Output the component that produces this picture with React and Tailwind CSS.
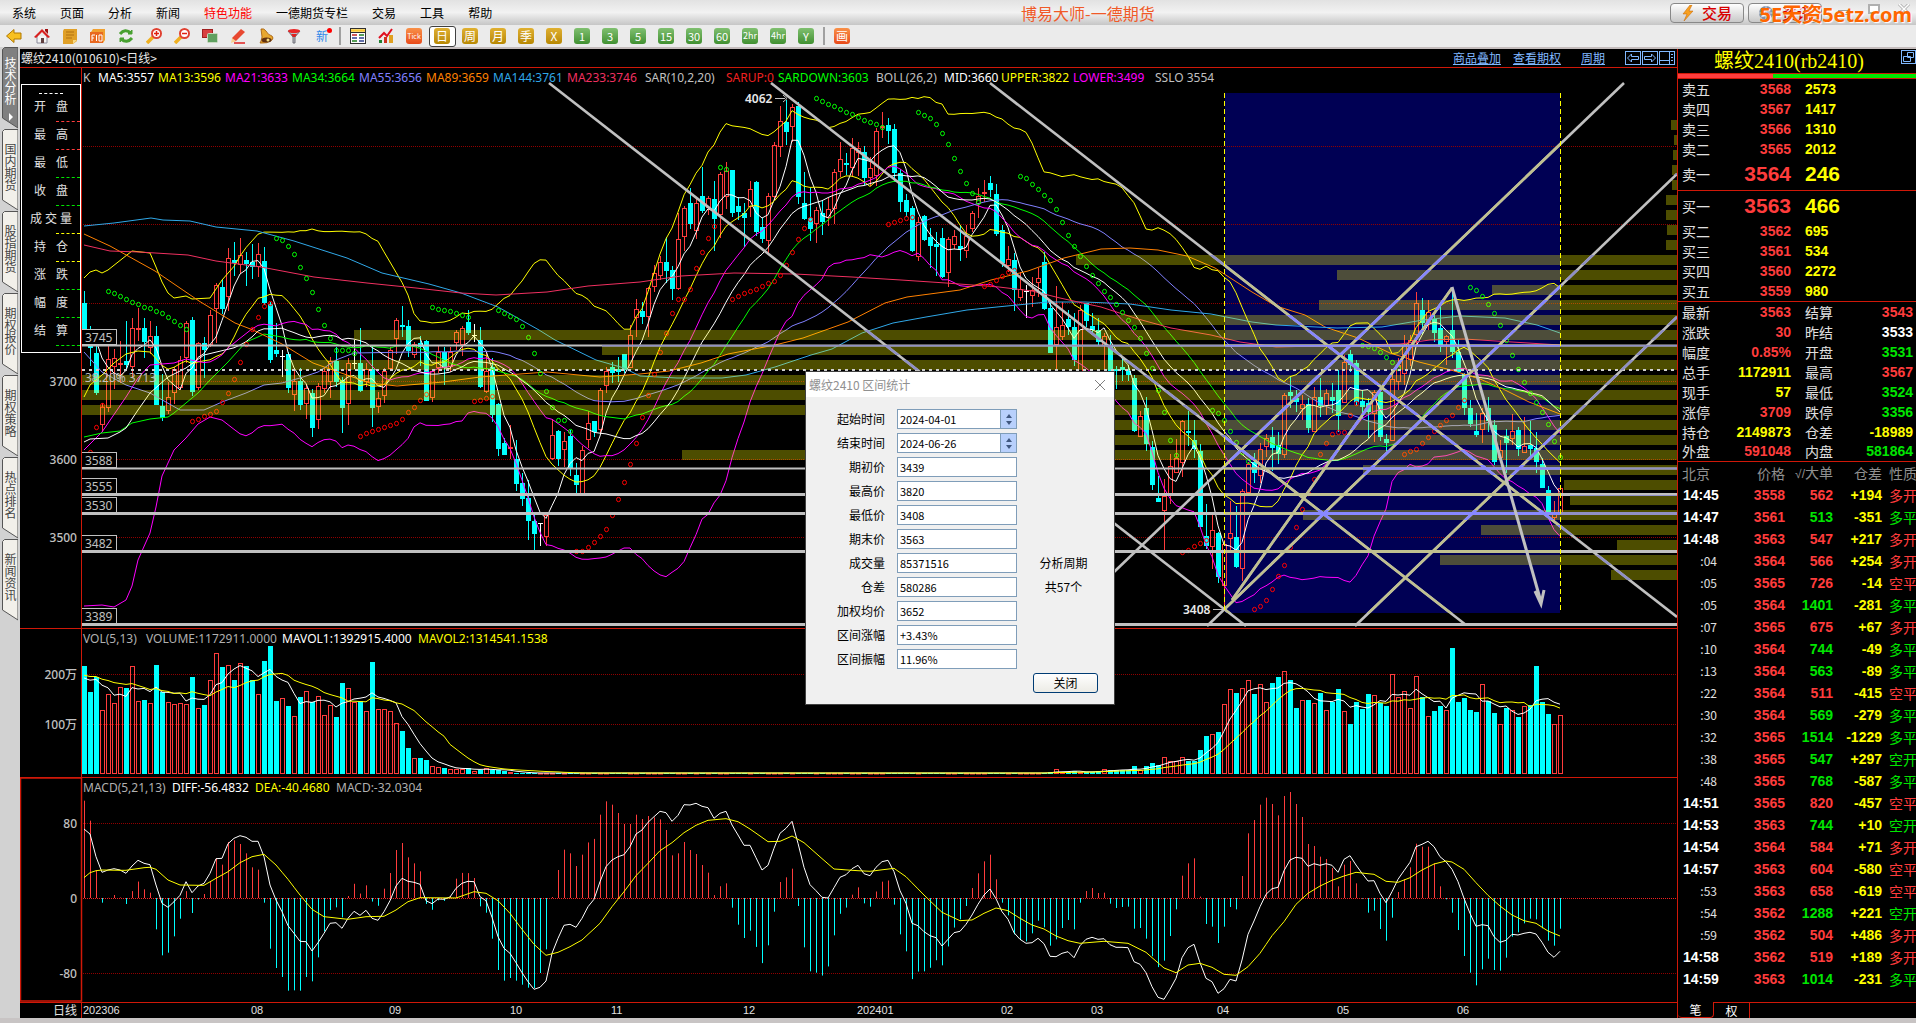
import React from "react";

/* ---------- market data ---------- */

// One token per day: kind (c = down, r = up, w = flat), then high, body top, body bottom, low.
const CANDLES = `
c291,303,330,330 c326,345,348,366 c345,353,393,395 r403,407,425,432 r346,359,408,412 r349,358,367,389 r341,363,365,383 c321,361,365,370
r318,328,367,377 r308,328,330,341 c318,328,342,358 r321,336,348,354 c326,336,405,405 c374,406,418,421 r382,397,411,414 r367,369,393,404
r356,360,388,390 r321,323,358,363 c317,320,392,396 r342,343,388,390 c337,343,350,378 r310,315,345,347 r283,285,309,343 c279,287,309,314
r248,258,297,311 c242,260,263,276 r238,255,265,273 c252,260,264,286 c244,262,267,279 r243,254,267,277 c247,261,303,305 c302,304,360,363
c323,350,354,357 w350,356,356,377 c352,354,388,393 r370,381,395,411 c368,381,405,410 r384,388,404,419 c389,393,428,437 r383,386,420,429
r368,371,389,393 r357,361,382,398 c347,361,382,387 c377,380,408,433 r358,363,404,425 w340,363,363,369 c328,363,391,392 r363,369,382,387
c345,369,408,427 r392,398,407,413 r368,371,396,403 r347,350,369,370 r318,320,339,354 c306,325,327,337 c320,326,351,357 r342,344,355,358
c336,343,347,366 c340,341,401,401 r369,371,398,402 r346,352,368,373 c347,352,368,385 r347,352,367,372 r330,332,343,350 r326,328,345,356
c310,322,333,335 w324,335,335,342 c327,340,387,388 r353,371,392,393 c358,367,415,422 c403,404,449,456 c438,443,455,455 r425,447,449,459
c440,459,484,491 c473,483,499,506 c480,498,521,540 c514,521,534,552 w523,523,523,546 r513,515,537,546 r419,435,459,460 c430,431,459,466
r432,441,450,467 c430,436,468,476 c463,475,485,495 r446,450,494,495 r411,423,440,448 c421,421,432,437 r388,390,430,433 r367,371,386,393
c362,367,373,383 c357,369,372,382 c354,354,370,373 r325,335,368,368 r299,309,318,337 c302,311,317,324 r287,288,317,337 r265,273,287,292
r256,262,276,280 c237,262,271,283 c266,270,289,300 r213,239,289,290 r206,208,237,251 c188,203,224,229 r197,203,231,239 c167,196,211,213
r196,198,208,215 c181,199,219,251 r172,174,215,238 r162,171,197,209 c170,170,213,217 c197,206,212,220 c203,213,218,247 r181,189,207,217
c181,182,232,236 c218,227,239,243 r193,196,241,255 r142,145,197,200 r106,121,147,157 c100,122,132,145 r104,107,127,142 c102,106,197,204
c172,203,219,220 c188,218,229,241 r207,210,224,243 c200,213,222,235 r198,209,218,226 r169,172,209,224 r142,159,172,177 c153,163,165,175
r138,148,168,177 r142,148,153,176 c146,152,178,185 r157,168,178,186 r128,131,176,186 r112,126,128,138 c118,125,131,144 c124,129,173,182
c169,173,202,212 c194,200,212,217 c206,208,251,252 r217,222,257,261 c215,216,240,241 c228,237,246,268 c232,244,247,276 c228,238,277,278
r237,239,273,287 r230,236,245,249 c225,246,249,261 r225,236,251,258 r211,213,229,232 r188,196,204,218 r180,192,194,202 c176,183,190,197
c184,194,234,236 c225,230,263,267 r246,259,266,272 c253,260,290,311 r272,289,298,301 w285,291,291,318 r277,290,296,307 r268,278,283,297
c252,262,309,310 c302,308,353,353 r286,327,345,372 r302,325,337,340 c310,319,327,335 c313,327,360,366 r305,310,372,372 c303,303,321,327
c313,326,330,335 c318,330,342,345 r333,336,346,372 c335,345,372,372 c366,369,371,389 c357,367,370,381 c365,371,375,381 c375,378,431,432
r411,416,437,437 c397,408,444,451 c441,447,485,490 c476,498,502,502 r479,496,511,552 r454,466,496,504 r439,458,473,473 r420,421,463,477
c411,431,433,446 c420,440,449,458 c444,451,527,527 c504,536,546,549 r513,530,547,569 c532,533,577,583 r540,544,586,607 r501,533,539,552
c506,537,567,568 r489,491,569,581 r462,464,493,493 c453,462,473,483 r443,449,476,483 r434,438,447,457 c427,437,448,471 c432,445,454,464
r393,395,455,458 c377,392,396,408 c390,398,402,412 r395,404,409,420 c398,404,428,433 r387,397,432,432 c378,397,406,417 r389,393,406,415
c383,397,401,413 c370,390,416,432 r355,362,403,403 c350,354,365,372 c360,363,402,405 c390,401,407,418 c398,403,412,438 r390,392,414,442
c390,392,437,441 c434,439,443,451 r373,379,441,441 r358,365,382,390 r335,345,374,385 r335,340,360,366 r292,303,335,345 c298,310,323,335
r300,312,323,330 c314,319,333,342 c303,328,347,352 r335,336,342,365 c290,330,352,358 c340,352,372,373 c373,374,408,415 c400,408,424,427
c413,431,435,437 r408,413,430,443 c397,408,421,432 c420,425,462,465 r440,450,458,462 c429,436,443,473 r414,431,439,445 c427,430,449,456
r417,446,453,453 c421,445,449,458 c432,448,462,473 c458,464,488,488 c486,490,513,514 r501,512,518,521 r486,488,513,513
`
  .trim()
  .split(/\s+/)
  .map((t) => {
    const [high, top, bottom, low] = t.slice(1).split(",").map(Number);
    const kind = t[0];
    return { kind, high, top, bottom, low, close: kind === "c" ? bottom : top };
  });

const BARS = CANDLES.length;
const px = (i) => 84 + 6 * i;

const flat = (n, v) => Array(n).fill(v);
const VOLUMES = [
  666, 692, 677, 710, 694, 703, 687, 688, 666, 701, 700, 703, 665, 692, 702, 704, 703, 704, 677, 708, 705, 680, 653, 667, 665, 680,
  663, 666, 680, 694, 661, 646, 701, 698, 706, 716, 697, 691, 702, 696, 715, 705, 717, 683, 688, 702, 701, 711, 662, 709, 709, 711,
  723, 731, 748, 758, 758, 760, 766, 767, 768, 769, 769, 769, 768, 771, 770, 768, 770, 770, 771, 772,
  ...flat(89, 773),
  772, 769, 772, 772, 771, 772, 772, 772, 771, 769, 770, 770, 770, 770, 766, 770, 766, 763, 765, 757, 761, 761, 757, 761, 761, 750,
  736, 734, 732, 704, 689, 693, 688, 680, 694, 684, 702, 683, 677, 671, 680, 708, 700, 700, 703, 693, 710, 702, 689, 711, 724, 702,
  709, 694, 695, 703, 706, 674, 697, 691, 708, 676, 697, 716, 711, 706, 710, 648, 702, 698, 710, 712, 684, 701, 713, 724, 708, 710,
  717, 706, 705, 666, 702, 714, 724, 715,
];

const DIFF = [
  597, 612, 680, 727, 720, 716, 720, 730, 708, 691, 700, 704, 765, 820, 832, 815, 796, 755, 788, 768, 760, 730, 686, 685, 641, 625,
  617, 622, 634, 634, 680, 765, 810, 845, 887, 910, 934, 935, 963, 938, 910, 880, 878, 895, 865, 844, 856, 841, 865, 871, 845, 812,
  768, 745, 754, 757, 763, 812, 821, 807, 808, 801, 775, 760, 754, 755, 800, 812, 862, 920, 955, 970, 998, 1028, 1055, 1078, 1072,
  1053, 970, 925, 886, 883, 892, 865, 830, 808, 755, 710, 690, 680, 674, 650, 612, 600, 577, 560, 544, 548, 574, 556, 524, 525, 520,
  529, 533, 565, 550, 544, 585, 615, 646, 646, 683, 720, 706, 655, 610, 595, 574, 640, 712, 764, 782, 802, 804, 773, 742, 734, 716,
  706, 731, 737, 712, 695, 691, 725, 782, 820, 880, 887, 905, 917, 923, 948, 928, 908, 904, 883, 855, 823, 795, 777, 806, 845, 868,
  908, 928, 940, 938, 925, 941, 979, 980, 970, 965, 983, 947, 928, 922, 928, 926, 944, 952, 952, 953, 995, 1003, 1028, 1070, 1102,
  1108, 1078, 1045, 983, 953, 943, 998, 1045, 1055, 1090, 1076, 1048, 1053, 990, 913, 873, 830, 793, 776, 772, 722, 690, 682, 685,
  709, 701, 706, 701, 706, 727, 688, 677, 705, 730, 753, 752, 790, 818, 785, 748, 722, 697, 650, 643, 634, 650, 680, 695, 718, 755,
  805, 850, 889, 884, 887, 920, 937, 931, 913, 915, 910, 907, 912, 937, 967, 982, 964,
];

const DEA_KNOTS = [
  [0, 743], [1, 728], [2, 722], [3, 720], [7, 721], [10, 713], [11, 712], [12, 718], [14, 750], [16, 765], [20, 766], [22, 745],
  [24, 725], [26, 698], [28, 680], [30, 673], [32, 705], [34, 748], [36, 795], [38, 838], [40, 860], [44, 868], [47, 860], [50, 859],
  [52, 840], [54, 815], [56, 803], [62, 804], [65, 785], [67, 790], [69, 812], [71, 850], [73, 898], [75, 943], [77, 976], [79, 967],
  [81, 950], [83, 930], [86, 880], [88, 830], [90, 785], [92, 737], [94, 700], [96, 662], [98, 638], [100, 608], [102, 586],
  [104, 571], [107, 566], [109, 575], [111, 597], [114, 635], [116, 634], [118, 618], [120, 638], [122, 670], [125, 717], [128, 721],
  [131, 724], [135, 715], [137, 740], [140, 795], [143, 847], [146, 872], [148, 870], [150, 850], [152, 834], [154, 842], [156, 865],
  [158, 885], [160, 897], [162, 918], [164, 932], [166, 940], [170, 934], [174, 940], [177, 967], [180, 1014], [182, 1028],
  [184, 1005], [186, 1000], [188, 1012], [190, 1033], [192, 1036], [194, 1010], [196, 970], [198, 917], [200, 875], [202, 823],
  [204, 790], [206, 768], [208, 751], [210, 738], [212, 727], [215, 733], [217, 754], [219, 757], [221, 743], [223, 720], [225, 702],
  [227, 693], [228, 696], [230, 718], [232, 758], [234, 796], [236, 828], [238, 855], [240, 872], [242, 880], [244, 903], [246, 918],
];

function interpolate(knots, i) {
  for (let k = 1; k < knots.length; k++) {
    if (i <= knots[k][0]) {
      const [x0, y0] = knots[k - 1];
      const [x1, y1] = knots[k];
      return y0 + ((y1 - y0) * (i - x0)) / (x1 - x0);
    }
  }
  return knots[knots.length - 1][1];
}
const DEA = DIFF.map((_, i) => interpolate(DEA_KNOTS, i));
const macdY = (v) => 630 + v / 3;

// Parabolic SAR runs: [first bar, colour, values...]
const SAR = [
  [1, "r", 452, 427, 405],
  [4, "g", 291, 293, 296, 299, 302, 304, 307, 308, 311, 313, 317, 321, 325, 329],
  [18, "r", 421, 419, 416, 414, 411, 402, 393, 379, 362, 344, 329, 317, 306, 303],
  [32, "g", 238, 240, 246, 254, 267, 278, 292, 309, 325, 338, 350, 350, 350, 353],
  [46, "r", 436, 433, 431, 429, 427, 425, 423, 419, 412, 407, 400, 394],
  [58, "g", 307, 309, 310, 311, 313, 315, 317],
  [65, "r", 401, 400, 398, 396],
  [69, "g", 310, 313, 316, 319, 326, 337, 353, 373, 391, 407, 420, 420, 431],
  [82, "r", 551, 551, 547, 542, 536, 529, 515, 499, 482, 464, 443, 417, 395, 374, 352, 333, 313, 299, 299, 289, 268, 252, 238, 226],
  [106, "g", 167, 169],
  [108, "r", 299, 296, 293, 291, 289, 286, 283, 281, 275, 265, 252, 239, 228, 219],
  [122, "g", 98, 101, 104, 106, 109, 112, 114, 117, 120, 122, 124, 127],
  [134, "r", 224, 222, 220, 218, 217],
  [139, "g", 112, 115, 118, 124, 133, 144, 158, 171, 183, 193, 202],
  [150, "r", 286, 284, 280, 276, 272, 270],
  [156, "g", 176, 178, 184, 189, 195, 200, 209, 222, 235, 246, 256, 266, 275, 283, 291, 297, 304, 312, 320, 327, 338, 353, 368, 390, 412, 440, 455],
  [183, "r", 552, 550, 546, 543, 540],
  [188, "g", 410, 413, 420, 431, 442, 452, 461],
  [195, "r", 609, 606, 600, 589, 576, 565, 547, 527, 509, 493, 479, 454, 443, 434, 432, 432, 415, 403],
  [213, "g", 345, 346, 348, 352, 357, 362, 368],
  [220, "r", 454, 451, 449, 443, 437, 431, 425, 420, 415, 407, 400],
  [231, "g", 287, 290, 296, 304, 313, 325, 340, 355, 369, 382, 393, 402, 412, 424, 441, 457],
];

// Left ends of the volume-at-price bars; one bar every 15px from y = 120.
const PROFILE = [
  1671, 1674, 1673, 1672, 1672, 1666, 1666, 1667, 1666, 1076, 1337, 1492, 1319, 1093, 354, 602, 284, 82, 82, 82, 900, 900, 682, 1363,
  1564, 1570, 1303, 1481, 1617, 1440, 1611,
];

/* ---------- indicator lines ---------- */

const points = (list) => list.map(([x, y]) => `${x},${y.toFixed(1)}`).join(" ");
const closes = CANDLES.map((c) => c.close);

function window(values, i, n) {
  return values.slice(Math.max(0, i - n + 1), i + 1);
}
const mean = (a) => a.reduce((s, v) => s + v, 0) / a.length;

function movingAverage(n, lead, spread = 0) {
  const out = lead.map(([i, y]) => [px(i), y]);
  for (let i = n - 1; i < BARS; i++) {
    const w = window(closes, i, n);
    const m = mean(w);
    const sd = spread ? Math.sqrt(mean(w.map((v) => (v - m) ** 2))) : 0;
    out.push([px(i), m + spread * sd]);
  }
  return points(out);
}

function volumeAverage(n, seed) {
  const padded = [...flat(n - 1, seed), ...VOLUMES];
  return points(VOLUMES.map((_, i) => [px(i), mean(padded.slice(i, i + n))]));
}

const MA89 = "84,234 110,246 155,271 199,301 235,323 253,330 282,344 313,363 347,375 370,383 397,386 443,382 480,377 547,372 600,377 640,374 669,371 701,363 728,354 775,345 803,338 848,322 885,303 907,297 960,290 991,280 1028,271 1064,258 1101,249 1130,248 1158,250 1187,256 1215,268 1252,292 1276,306 1305,315 1325,327 1358,338 1390,353 1419,362 1451,370 1480,379 1505,390 1529,402 1560,414";
const MA144 = "84,226 114,223 151,218 163,220 190,221 216,227 257,231 294,241 347,258 382,273 429,284 461,293 498,307 539,330 555,340 596,360 624,368 640,376 677,378 722,378 746,375 775,367 811,355 832,349 862,333 893,323 926,317 967,310 1007,306 1048,302 1085,302 1130,304 1171,310 1211,314 1252,322 1276,325 1337,328 1382,327 1423,320 1460,316 1505,318 1537,325 1560,333";
const MA233 = "84,245 110,251 139,252 188,255 216,261 261,267 314,277 367,283 416,288 461,293 496,295 547,292 588,286 640,282 681,276 734,273 795,274 852,277 901,280 946,283 999,287 1032,291 1060,298 1101,307 1138,319 1171,328 1211,335 1240,342 1276,347 1400,344 1430,340 1464,339 1560,345";

const LINES = [
  [movingAverage(5, [[0, 330], [2, 340], [3, 358]]), "#ffffff"],
  [movingAverage(13, [[0, 397], [1, 385], [3, 375], [5, 363], [7, 354], [9, 351], [11, 352]]), "#ffff00"],
  [movingAverage(21, [[0, 450], [1, 444], [3, 432], [7, 397], [9, 378], [11, 365], [15, 363], [17, 359]]), "#ff00ff"],
  [movingAverage(34, [[0, 437], [3, 433], [6, 431], [8, 423], [11, 419], [14, 417], [15, 413], [19, 393], [21, 380], [24, 362], [27, 342], [29, 337], [30, 334]]), "#00ff00"],
  [movingAverage(55, [[0, 352], [3, 372], [7, 385], [11, 393], [16, 410], [20, 410], [23, 402], [27, 393], [30, 385], [33, 383], [36, 378], [39, 372], [42, 360], [45, 353]]), "#8080ff"],
  [movingAverage(26, [[0, 442], [1, 439], [4, 438], [6, 432], [7, 428], [9, 410], [11, 393], [14, 377], [17, 368], [20, 355]]), "#ffffff"],
  [movingAverage(26, [[0, 278], [1, 272], [2, 270], [3, 273], [4, 270], [8, 251], [11, 253], [12, 267], [13, 282], [14, 293], [15, 298], [17, 296], [18, 299], [21, 298], [23, 280]], -2), "#ffff00"],
  [movingAverage(26, [[0, 606], [3, 605], [5, 607], [7, 600], [8, 586], [9, 560], [11, 533], [12, 507], [13, 476], [15, 450], [17, 438], [19, 424], [21, 417], [23, 420]], 2), "#ff00ff"],
  [MA89, "#ff8000"],
  [MA144, "#30a8e8"],
  [MA233, "#f03060"],
];

/* ---------- charts ---------- */

const CHART_FONT = '"Noto Sans", "Noto Sans CJK SC", sans-serif';

function Pane({ top, height, label, children }) {
  return (
    <svg
      viewBox={`20 ${top} 1657 ${height}`}
      preserveAspectRatio="none"
      role="img"
      aria-label={label}
      className="block h-full w-full"
      fontFamily={CHART_FONT}
      fontSize="12"
    >
      {children}
    </svg>
  );
}

function Grid({ ys, color = "#900000" }) {
  return ys.map((y) => (
    <line key={y} x1="83" x2="1677" y1={y + 0.5} y2={y + 0.5} stroke={color} strokeDasharray="1 1" shapeRendering="crispEdges" />
  ));
}

function Legend({ y, items }) {
  return items.map(([x, text, color]) => (
    <text key={text} x={x} y={y} fill={color}>
      {text}
    </text>
  ));
}

function AxisLabels({ items }) {
  return items.map(([y, text]) => (
    <text key={text} x="77" y={y} textAnchor="end" fill="#c0c0c0" fontWeight="500">
      {text}
    </text>
  ));
}

function Candle({ c, i }) {
  const x = px(i);
  if (c.kind === "w") {
    return (
      <g fill="#ffffff">
        <rect x={x} y={c.high} width="1" height={c.low - c.high} />
        <rect x={x - 2} y={c.top} width="5" height="1" />
      </g>
    );
  }
  if (c.kind === "c") {
    return (
      <g fill="#00ffff">
        <rect x={x} y={c.high} width="1" height={Math.max(0, c.low - c.high)} />
        <rect x={x - 2} y={c.top} width="5" height={Math.max(1, c.bottom - c.top)} />
      </g>
    );
  }
  return (
    <g fill="#ff3c3c">
      <rect x={x} y={c.high} width="1" height={Math.max(0, c.top - c.high)} />
      <rect x={x} y={c.bottom} width="1" height={Math.max(0, c.low - c.bottom)} />
      <rect x={x - 1.5} y={c.top + 0.5} width="4" height={Math.max(1, c.bottom - c.top - 1)} fill="#000" fillOpacity="0" stroke="#ff3c3c" />
    </g>
  );
}

const TRENDS = [
  [549, 83, 1246, 626],
  [771, 83, 1466, 625],
  [990, 83, 1677, 617],
  [1624, 83, 1114, 572],
  [1677, 174, 1207, 626],
  [1677, 317, 1355, 626],
  [1232, 600, 1452, 288],
];
const LEVELS = [
  [345, 2, "3745"],
  [468, 2, "3588"],
  [494, 3, "3555"],
  [513, 3, "3530"],
  [551, 3, "3482"],
  [624, 3, "3389"],
];

function Drawings({ color, clip }) {
  return (
    <g stroke={color} fill="none" clipPath={clip}>
      {TRENDS.map(([x1, y1, x2, y2]) => (
        <line key={`${x1}-${x2}-${y1}`} x1={x1} y1={y1} x2={x2} y2={y2} strokeWidth="2.6" />
      ))}
      {LEVELS.map(([y, h]) => (
        <line key={y} x1="81" x2="1677" y1={y + 0.5} y2={y + 0.5} strokeWidth={h} />
      ))}
    </g>
  );
}

function PriceChart() {
  return (
    <Pane top={68} height={560} label="K线图">
      <defs>
        <clipPath id="selection">
          <rect x="1225" y="93" width="335" height="520" />
        </clipPath>
        <clipPath id="profile">
          {PROFILE.map((x, k) => (
            <rect key={k} x={x} y={120 + 15 * k} width={1677 - x} height="10" />
          ))}
        </clipPath>
      </defs>
      <rect x="1225" y="93" width="335" height="520" fill="#000054" />
      <Grid ys={[146, 224, 303, 381, 459, 537]} />
      {CANDLES.map((c, i) => (
        <Candle key={i} c={c} i={i} />
      ))}
      {LINES.map(([p, color], k) => (
        <polyline key={k} points={p} fill="none" stroke={color} strokeWidth="1" />
      ))}
      {SAR.map(([start, tone, ...values]) =>
        values.map((y, k) => (
          <ellipse key={start + k} cx={px(start + k) + 0.5} cy={y + 0.5} rx="2" ry="2.2" fill="none" stroke={tone === "g" ? "#00ff00" : "#ff0000"} />
        ))
      )}
      {PROFILE.map((x, k) => (
        <rect key={k} x={x} y={120 + 15 * k} width={1677 - x} height="10" fill="#ffff00" fillOpacity="0.3" />
      ))}
      <line x1="82" x2="1677" y1="370" y2="370" stroke="#d0d0d0" strokeWidth="2" strokeDasharray="3 4" />
      <Drawings color="#c0c0c0" />
      <g clipPath="url(#selection)">
        <Drawings color="#c0c090" />
      </g>
      <Drawings color="#9090c4" clip="url(#profile)" />
      <g clipPath="url(#selection)">
        <Drawings color="#8888ff" clip="url(#profile)" />
      </g>
      <g stroke="#c0c0c0" fill="#c0c0c0" strokeWidth="3">
        <line x1="1452" y1="287" x2="1541" y2="602" />
        <path d="M1535 591l6 13 3-14" fill="none" />
      </g>
      <g stroke="#ffff00" strokeDasharray="5 3" shapeRendering="crispEdges">
        <line x1="1224.5" x2="1224.5" y1="93" y2="613" />
        <line x1="1560.5" x2="1560.5" y1="93" y2="613" />
      </g>
      {LEVELS.map(([y, , text]) => (
        <g key={text}>
          <rect x="81.5" y={y - 15.5} width="35" height="15" fill="#000" stroke="#c0c0c0" />
          <text x="85" y={y - 3} fill="#c0c0c0">
            {text}
          </text>
        </g>
      ))}
      <text x="85" y="382" fill="#c0c0c0">38.20% 3713</text>
      <g fill="#e8e8e8" fontWeight="600">
        <text x="745" y="103">4062</text>
        <text x="1183" y="614">3408</text>
      </g>
      <g stroke="#c0c0c0" fill="none">
        <path d="M775 98.5h10M783 95l4 3.500l-4 3.500" />
        <path d="M1213 609.5h10" />
      </g>
      <line x1="81.500" x2="81.500" y1="68" y2="628" stroke="#d01808" />
      <AxisLabels items={[[386, "3700"], [464, "3600"], [542, "3500"]]} />
      <Legend
        y={82}
        items={[
          [83, "K", "#c0c0c0"],
          [98, "MA5:3557", "#ffffff"],
          [158, "MA13:3596", "#ffff00"],
          [225, "MA21:3633", "#ff00ff"],
          [292, "MA34:3664", "#00ff00"],
          [359, "MA55:3656", "#8080ff"],
          [426, "MA89:3659", "#ff8000"],
          [493, "MA144:3761", "#30a8e8"],
          [567, "MA233:3746", "#f03060"],
          [645, "SAR(10,2,20)", "#c0c0c0"],
          [726, "SARUP:0", "#f02020"],
          [778, "SARDOWN:3603", "#00ff00"],
          [876, "BOLL(26,2)", "#c0c0c0"],
          [944, "MID:3660", "#ffffff"],
          [1001, "UPPER:3822", "#ffff00"],
          [1073, "LOWER:3499", "#ff00ff"],
          [1155, "SSLO 3554", "#c0c0c0"],
        ]}
      />
    </Pane>
  );
}

function VolumeChart() {
  return (
    <Pane top={628} height={149} label="成交量">
      <Grid ys={[674, 724]} />
      {VOLUMES.map((y, i) =>
        CANDLES[i].kind === "c" ? (
          <rect key={i} x={px(i) - 2} y={y} width="5" height={774 - y} fill="#00ffff" />
        ) : (
          <rect key={i} x={px(i) - 1.5} y={y + 0.5} width="4" height={Math.max(0.5, 773 - y)} fill="none" stroke="#ff3c3c" />
        )
      )}
      <polyline points={volumeAverage(5, 681)} fill="none" stroke="#ffffff" />
      <polyline points={volumeAverage(13, 676)} fill="none" stroke="#ffff00" />
      <line x1="20" x2="1677" y1="628.5" y2="628.5" stroke="#d01808" />
      <line x1="81.500" x2="81.500" y1="628" y2="777" stroke="#d01808" />
      <AxisLabels items={[[679, "200万"], [729, "100万"]]} />
      <Legend
        y={643}
        items={[
          [83, "VOL(5,13)", "#b0b0b0"],
          [146, "VOLUME:1172911.0000", "#b0b0b0"],
          [282, "MAVOL1:1392915.4000", "#ffffff"],
          [418, "MAVOL2:1314541.1538", "#ffff00"],
        ]}
      />
    </Pane>
  );
}

function MacdChart() {
  return (
    <Pane top={777} height={225} label="MACD">
      <Grid ys={[823, 973]} />
      <Grid ys={[898]} color="#f02020" />
      {DIFF.map((d, i) => {
        const h = ((DEA[i] - d) * 2) / 3;
        return (
          <rect key={i} x={px(i)} y={h > 0 ? 898 - h : 898} width="1" height={Math.abs(h)} fill={h > 0 ? "#ff3c3c" : "#00ffff"} />
        );
      })}
      <polyline points={points(DIFF.map((v, i) => [px(i), macdY(v)]))} fill="none" stroke="#ffffff" />
      <polyline points={points(DEA.map((v, i) => [px(i), macdY(v)]))} fill="none" stroke="#ffff00" />
      <line x1="20" x2="1677" y1="777.5" y2="777.5" stroke="#d01808" />
      <rect x="20.500" y="778" width="61" height="223" fill="none" stroke="#d01808" strokeWidth="1.500" />
      <AxisLabels items={[[828, "80"], [903, "0"], [978, "-80"]]} />
      <Legend
        y={792}
        items={[
          [83, "MACD(5,21,13)", "#b0b0b0"],
          [172, "DIFF:-56.4832", "#ffffff"],
          [255, "DEA:-40.4680", "#ffff00"],
          [336, "MACD:-32.0304", "#b0b0b0"],
        ]}
      />
    </Pane>
  );
}

function DateAxis() {
  const marks = [
    [83, "202306"], [251, "08"], [389, "09"], [510, "10"], [611, "11"], [743, "12"], [857, "202401"], [1001, "02"], [1091, "03"],
    [1217, "04"], [1337, "05"], [1457, "06"],
  ];
  return (
    <Pane top={1002} height={16} label="日期">
      <line x1="20" x2="1677" y1="1002.5" y2="1002.5" stroke="#d01808" />
      <line x1="81.500" x2="81.500" y1="1002" y2="1018" stroke="#d01808" />
      <text x="53" y="1015" fill="#e0e0e0">日线</text>
      {marks.map(([x, text]) => (
        <text key={text} x={x} y="1014" fill="#e0e0e0" fontSize="11" fontFamily='"Liberation Sans", sans-serif'>
          {text}
        </text>
      ))}
    </Pane>
  );
}

/* ---------- window chrome ---------- */

const MENUS = ["系统", "页面", "分析", "新闻", "特色功能", "一德期货专栏", "交易", "工具", "帮助"];

function TitleBar() {
  return (
    <header className="relative flex h-[25px] shrink-0 items-center bg-linear-to-b from-[#e2e2e2] via-[#f2f2f2] to-[#c6c6c6] pl-3">
      <nav className="flex w-[53%] gap-6 text-[12px] leading-4 text-black">
        {MENUS.map((m) => (
          <button key={m} type="button" className={m === "特色功能" ? "text-[#ff0000]" : ""}>
            {m}
          </button>
        ))}
      </nav>
      <h1 className="text-[16px] leading-5 whitespace-nowrap text-[#f05a28]">博易大师-一德期货</h1>
      <div className="flex flex-1 items-center justify-end gap-1 pr-[2px]">
        <button type="button" className="flex h-5 w-[74px] items-center justify-center gap-2 rounded border border-[#888] bg-linear-to-b from-white to-[#c8c8c8] text-[15px] leading-4 font-medium text-[#d80000]">
          <svg viewBox="0 0 12 16" className="h-4 w-3" aria-hidden="true">
            <path d="M8 0L1 9h4l-3 7 9-10H7l3-6z" fill="#f8a020" stroke="#c06000" strokeWidth=".5" />
          </svg>
          交易
        </button>
        <button type="button" className="flex h-5 w-[74px] items-center justify-center gap-2 rounded border border-[#888] bg-linear-to-b from-white to-[#c8c8c8] text-[15px] leading-4 font-medium text-[#d80000]">
          <svg viewBox="0 0 16 16" className="h-4 w-4" aria-hidden="true">
            <circle cx="8" cy="8" r="7" fill="#8090a8" />
            <path d="M1 8h14M8 1v14M3 4q5 3 10 0M3 12q5-3 10 0" stroke="#d8dce8" fill="none" />
          </svg>
          资讯
        </button>
        <div className="ml-3 flex w-[76px] items-center justify-between pr-1 text-[#a0a0a0]">
          <button type="button" aria-label="最小化" className="h-[5px] w-3 border border-[#a0a0a0] bg-white" />
          <button type="button" aria-label="还原" className="mb-2 h-[10px] w-3 border-2 border-[#b0b0b0] bg-white" />
          <button type="button" aria-label="关闭窗口" className="mb-2">
            <svg viewBox="0 0 12 10" className="h-[10px] w-3">
              <path d="M1 0l10 10M11 0L1 10" stroke="#a8a8a8" strokeWidth="3" />
              <path d="M1 0l10 10M11 0L1 10" stroke="#fff" strokeWidth="1.500" />
            </svg>
          </button>
        </div>
      </div>
      <span className="pointer-events-none absolute top-0 right-1 text-[20px] leading-[29px] font-bold whitespace-nowrap text-[#ff6600] [font-family:'Noto_Sans','Noto_Sans_CJK_SC',sans-serif] [text-shadow:1px_1px_1px_#fff]">
        5E天资5etz.com
      </span>
    </header>
  );
}

const GLYPHS = {
  后退: <path d="M0.500 8L8 1.500V5h7v6H8v3.500z" fill="#f8c020" stroke="#b07800" />,
  首页: (
    <g>
      <path d="M3 8v7h10V8" fill="#f4f4f4" stroke="#889" />
      <path d="M0 9l8-8 8 8-2 1-6-6-6 6z" fill="#d82020" />
      <path d="M11 1h3v5l-3-3z" fill="#a01010" />
      <path d="M7 10h3v5H7z" fill="#604040" />
    </g>
  ),
  公告: (
    <g>
      <path d="M2 1h13v12l-4 3H1V3z" fill="#e0a028" />
      <path d="M4 4h8M4 7h8M4 10h6" stroke="#b07010" />
      <path d="M11 16v-4h4z" fill="#f8d880" />
    </g>
  ),
  F10: (
    <g>
      <path d="M1 4l2-3h12v11l-2 3H1z" fill="#f0a030" />
      <rect y="4" width="13" height="11" fill="#e86820" />
      <path d="M2 13V7h3M2 10h2M6.500 7v6M9 7h3v6H9z" stroke="#fff" fill="none" />
    </g>
  ),
  刷新: (
    <g fill="none" stroke="#48a030" strokeWidth="3">
      <path d="M2 6q5-6 11-1M14 10q-5 6-11 1" />
      <path d="M14 2v4h-4zM2 14v-4h4z" fill="#48a030" strokeWidth="1" />
    </g>
  ),
  放大: (
    <g>
      <path d="M1 15l6-6" stroke="#f0b020" strokeWidth="3.500" />
      <circle cx="10.500" cy="5.500" r="4.500" fill="#fff" stroke="#e04030" strokeWidth="2" />
      <path d="M8 5.500h5M10.500 3v5" stroke="#e02010" strokeWidth="1.500" />
    </g>
  ),
  缩小: (
    <g>
      <path d="M1 15l6-6" stroke="#f0b020" strokeWidth="3.500" />
      <circle cx="10.500" cy="5.500" r="4.500" fill="#fff" stroke="#e04030" strokeWidth="2" />
      <path d="M8 5.500h5" stroke="#e02010" strokeWidth="1.500" />
    </g>
  ),
  叠加: (
    <g>
      <rect x="0.500" y="1.500" width="10" height="8" fill="#d84040" stroke="#a02020" />
      <rect x="5.500" y="5.500" width="10" height="9" rx="1" fill="#60a060" stroke="#c8d8c0" />
    </g>
  ),
  画笔: (
    <g>
      <path d="M2 10L11 1l4 3-9 9-4 1z" fill="#e84830" />
      <path d="M2 10l4 3-5 2z" fill="#f8d090" />
      <path d="M4 15h11" stroke="#e02020" strokeWidth="1.500" />
    </g>
  ),
  预警: (
    <g>
      <path d="M3 1q3-1 5 2 2 4 6 5 2 2 0 4-5 4-12 3 1-1 2-6z" fill="#e8a830" stroke="#a05808" strokeWidth=".8" />
      <ellipse cx="8.500" cy="12" rx="5" ry="2.500" fill="#603010" />
      <circle cx="10" cy="12" r="1.500" fill="#f8e080" />
    </g>
  ),
  筛选: (
    <g>
      <path d="M2 3l5 6v6h2V9l5-6z" fill="#b8b8c0" stroke="#707078" />
      <ellipse cx="8" cy="3" rx="6" ry="2" fill="#e82828" />
      <path d="M5 6h6l-2 3H7z" fill="#e02020" />
    </g>
  ),
};

function ToolIcon({ name }) {
  return (
    <svg viewBox="0 0 16 16" className="h-4 w-4" aria-hidden="true">
      {GLYPHS[name]}
    </svg>
  );
}

const toolButton = "flex h-[22px] w-7 items-center justify-center";
const chip = "flex h-4 w-4 items-center justify-center rounded-[3px] leading-4 text-white";
const gold = "bg-linear-to-b from-[#e0b030] to-[#b88800]";
const green = "bg-linear-to-b from-[#80c070] to-[#409030]";
const red = "bg-linear-to-b from-[#f89048] to-[#e84818]";

function Toolbar() {
  return (
    <div className="flex h-[22px] shrink-0 items-center bg-[#ebebeb]" role="toolbar">
      {Object.keys(GLYPHS).map((n) => (
        <button key={n} type="button" aria-label={n} className={toolButton}>
          <ToolIcon name={n} />
        </button>
      ))}
      <button type="button" className={`${toolButton} relative text-[12px] leading-4 text-[#3088e8]`}>
        新
        <span className="absolute top-[3px] right-1 h-[5px] w-[5px] rounded-full bg-[#f00]" />
      </button>
      <span className="mx-[3px] h-[18px] w-[2px] bg-[#a0a0a0]" />
      <button type="button" aria-label="报价" className={toolButton}>
        <svg viewBox="0 0 16 16" className="h-4 w-4">
          <rect x=".5" y=".5" width="15" height="15" fill="#fff" stroke="#303030" />
          <path d="M1 2.500h14" stroke="#f8c830" strokeWidth="2.500" />
          <path d="M0 4.500h16" stroke="#303030" />
          <path d="M2 7h5" stroke="#c02020" strokeWidth="1.500" />
          <path d="M9 7h5M2 13h5" stroke="#208020" strokeWidth="1.500" />
          <path d="M2 10h5M9 10h5M9 13h5" stroke="#304090" strokeWidth="1.500" />
        </svg>
      </button>
      <button type="button" aria-label="走势" className={toolButton}>
        <svg viewBox="0 0 16 16" className="h-4 w-4">
          <path d="M1 15v-3h3v3z" fill="#208030" />
          <path d="M6 15V9h3v6z" fill="#d03020" />
          <path d="M11 15V7h4v8z" fill="#e0a020" />
          <path d="M1 10l5-5 3 3 5-7" fill="none" stroke="#e01020" strokeWidth="2" />
        </svg>
      </button>
      <button type="button" className={toolButton}>
        <span className={`${chip} ${red} text-[7px]`}>Tick</span>
      </button>
      <button type="button" aria-pressed="true" className={toolButton}>
        <span className="flex h-[21px] w-[27px] items-center justify-center rounded-[3px] border border-[#404040] bg-white">
          <span className={`${chip} ${gold} text-[12px]`}>日</span>
        </span>
      </button>
      {["周", "月", "季", "X"].map((t) => (
        <button key={t} type="button" className={toolButton}>
          <span className={`${chip} ${gold} text-[12px]`}>{t}</span>
        </button>
      ))}
      {["1", "3", "5", "15", "30", "60", "2hr", "4hr", "Y"].map((t) => (
        <button key={t} type="button" className={toolButton}>
          <span className={t.length > 2 ? `${chip} ${green} text-[9px]` : `${chip} ${green} text-[11px]`}>{t}</span>
        </button>
      ))}
      <span className="mx-[3px] h-[18px] w-[2px] bg-[#a0a0a0]" />
      <button type="button" className={toolButton}>
        <span className={`${chip} ${red} text-[12px]`}>画</span>
      </button>
    </div>
  );
}

const TABS = ["技术分析", "国内期货", "股指期货", "期权报价", "期权策略", "热点排名", "新闻资讯"];

function SideTabs() {
  return (
    <nav className="-mt-[2px] w-5 shrink-0 bg-[#d2d2d2]">
      {TABS.map((t, k) => (
        <button key={t} type="button" className="relative flex h-[82px] w-[18px] flex-col items-center pt-[10px] pl-[3px]">
          <svg viewBox="0 0 18 82" className="absolute inset-0 h-full w-full" aria-hidden="true">
            <path d="M18 .5H4.500L2.500 2.500V71L18 81z" fill={k === 0 ? "#808080" : "#f2f0ea"} stroke="#555" />
          </svg>
          <span className={k === 0 ? "relative w-3 text-[12px] leading-[12px] text-white" : "relative mt-1 w-3 text-[12px] leading-[12px] text-[#444]"}>{t}</span>
          {k === 0 && <span className="relative mt-2 border-y-4 border-l-4 border-y-transparent border-l-white" />}
        </button>
      ))}
    </nav>
  );
}

/* ---------- overlays ---------- */

const INFO = [
  ["开盘", "border-[#ff3c3c]"],
  ["最高", "border-[#ff3c3c]"],
  ["最低", "border-[#00e600]"],
  ["收盘", "border-[#00e600]"],
  ["成交量", "border-[#ffff00]"],
  ["持仓", "border-[#ffff00]"],
  ["涨跌", "border-[#00e600]"],
  ["幅度", "border-[#00e600]"],
  ["结算", "border-[#00e600]"],
];

function InfoBox() {
  return (
    <aside className="absolute top-[35px] left-[1px] w-[60px] border border-white bg-black pb-[6px] text-[12px] text-[#e0e0e0]">
      <div className="mx-auto mt-2 w-6 border-t border-dashed border-white" />
      {INFO.map(([label, tone]) => (
        <div key={label} className="flex h-7 flex-col items-end justify-between">
          <div className={label.length === 3 ? "flex w-full justify-between pt-1 pr-2 pl-2 leading-4" : "flex w-full justify-between pt-1 pr-3 pl-3 leading-4"}>
            {[...label].map((ch) => (
              <span key={ch}>{ch}</span>
            ))}
          </div>
          <div className={`w-6 border-t border-dashed ${tone}`} />
        </div>
      ))}
    </aside>
  );
}

const FIELDS = [
  ["起始时间", "2024-04-01", true],
  ["结束时间", "2024-06-26", true],
  ["期初价", "3439"],
  ["最高价", "3820"],
  ["最低价", "3408"],
  ["期末价", "3563"],
  ["成交量", "85371516", false, "分析周期"],
  ["仓差", "580286", false, "共57个"],
  ["加权均价", "3652"],
  ["区间涨幅", "+3.43%"],
  ["区间振幅", "11.96%"],
];

function RangeDialog() {
  return (
    <section role="dialog" aria-label="区间统计" className="absolute top-[371px] left-[805px] w-[310px] border border-[#404040] bg-[#f0f0f0] text-[12px] text-black">
      <div className="flex h-[25px] items-center justify-between bg-white pr-2 pl-[3px] leading-4 text-[#909090]">
        <span>螺纹2410 区间统计</span>
        <button type="button" aria-label="关闭对话框">
          <svg viewBox="0 0 12 12" className="h-3 w-3">
            <path d="M1 1l10 10M11 1L1 11" stroke="#808080" />
          </svg>
        </button>
      </div>
      <div className="flex flex-col gap-1 pt-3">
        {FIELDS.map(([label, value, spin, note], k) => (
          <div key={label} className="grid h-5 grid-cols-[79px_120px_1fr] items-center gap-x-3">
            <label htmlFor={`field-${k}`} className="text-right leading-4">
              {label}
            </label>
            <div className="flex h-5 border border-[#7f9db9] bg-white">
              <input id={`field-${k}`} defaultValue={value} className="w-full min-w-0 pl-[2px] text-[11px] leading-4 outline-none" />
              {spin && (
                <span className="flex w-4 shrink-0 flex-col items-center justify-center gap-[3px] border-l border-[#7f9db9] bg-[#b8d0fc]">
                  <button type="button" aria-label="增加" className="border-x-[3px] border-b-4 border-x-transparent border-b-[#405880]" />
                  <button type="button" aria-label="减少" className="border-x-[3px] border-t-4 border-x-transparent border-t-[#405880]" />
                </span>
              )}
            </div>
            <span className="pr-4 text-center leading-4">{note}</span>
          </div>
        ))}
      </div>
      <div className="flex justify-end pt-1 pr-4 pb-[11px]">
        <button type="button" className="h-5 w-[65px] rounded-[3px] border border-[#003c74] bg-linear-to-b from-white to-[#ecebe5] leading-4">
          关闭
        </button>
      </div>
    </section>
  );
}

/* ---------- chart area ---------- */

const navIcon = "h-[14px] w-4 border border-[#80b8ff]";

function ChartArea() {
  return (
    <main className="grid min-w-0 flex-1 grid-rows-[19px_minmax(0,560fr)_minmax(0,149fr)_minmax(0,225fr)_16px] bg-black">
      <div className="flex items-center border-b border-[#d01808] pl-[1px] text-[12px] leading-4 text-[#e8e8e8]">
        <span className="flex-1">螺纹2410(010610)&lt;日线&gt;</span>
        <a href="#overlay" className="mr-3 text-[#80b8ff] underline">商品叠加</a>
        <a href="#options" className="mr-5 text-[#80b8ff] underline">查看期权</a>
        <a href="#period" className="mr-5 text-[#80b8ff] underline">周期</a>
        <div className="flex gap-px pr-[2px]">
          <button type="button" aria-label="向左" className={navIcon}>
            <svg viewBox="0 0 14 12" className="h-3 w-[14px]"><path d="M1.500 6l4-4v2.500h7v3h-7V10z" fill="none" stroke="#80b8ff" /></svg>
          </button>
          <button type="button" aria-label="向右" className={navIcon}>
            <svg viewBox="0 0 14 12" className="h-3 w-[14px]"><path d="M12.500 6l-4-4v2.500h-7v3h7V10z" fill="none" stroke="#80b8ff" /></svg>
          </button>
          <button type="button" aria-label="布局" className={navIcon}>
            <svg viewBox="0 0 14 12" className="h-3 w-[14px]"><path d="M9.500 0v12M0 8.500h9M11 2.500h2M11 5.500h2M11 8.500h2" stroke="#80b8ff" /></svg>
          </button>
        </div>
      </div>
      <PriceChart />
      <VolumeChart />
      <MacdChart />
      <DateAxis />
    </main>
  );
}

/* ---------- quote panel ---------- */

const R = "text-[#ff3c3c]";
const G = "text-[#00e600]";
const Y = "text-[#ffff00]";
const W = "text-[#ffffff]";
const NUM = "text-[14px] font-bold [font-family:'Liberation_Sans',sans-serif]";
const BIG = "text-[21px] font-bold [font-family:'Liberation_Sans',sans-serif]";

function Depth({ rows }) {
  return (
    <table className="w-full table-fixed border-t border-[#d01808]">
      <colgroup>
        <col className="w-[42px]" />
        <col className="w-[71px]" />
        <col />
      </colgroup>
      <tbody>
        {rows.map(([label, price, size, big]) => (
          <tr key={label} className={big ? "h-[31px]" : "h-5"}>
            <th scope="row" className="p-0 pl-[4px] text-left text-[14px] leading-4 font-normal text-[#e0e0e0]">{label}</th>
            <td className={`p-0 text-right leading-4 ${R} ${big ? BIG : NUM}`}>{price}</td>
            <td className={`p-0 pl-[14px] leading-4 ${Y} ${big ? BIG : NUM}`}>{size}</td>
          </tr>
        ))}
      </tbody>
    </table>
  );
}

const ASKS = [["卖五", "3568", "2573"], ["卖四", "3567", "1417"], ["卖三", "3566", "1310"], ["卖二", "3565", "2012"], ["卖一", "3564", "246", true]];
const BIDS = [["买一", "3563", "466", true], ["买二", "3562", "695"], ["买三", "3561", "534"], ["买四", "3560", "2272"], ["买五", "3559", "980"]];

const STATS = [
  ["最新", "3563", R, "结算", "3543", R],
  ["涨跌", "30", R, "昨结", "3533", W],
  ["幅度", "0.85%", R, "开盘", "3531", G],
  ["总手", "1172911", Y, "最高", "3567", R],
  ["现手", "57", Y, "最低", "3524", G],
  ["涨停", "3709", R, "跌停", "3356", G],
  ["持仓", "2149873", Y, "仓差", "-18989", Y],
  ["外盘", "591048", R, "内盘", "581864", G],
];

const TICKS = [
  ["14:45", "3558", "562", "+194", "多开", R],
  ["14:47", "3561", "513", "-351", "多平", G],
  ["14:48", "3563", "547", "+217", "多开", R],
  [":04", "3564", "566", "+254", "多开", R],
  [":05", "3565", "726", "-14", "空平", R],
  [":05", "3564", "1401", "-281", "多平", G],
  [":07", "3565", "675", "+67", "多开", R],
  [":10", "3564", "744", "-49", "多平", G],
  [":13", "3564", "563", "-89", "多平", G],
  [":22", "3564", "511", "-415", "空平", R],
  [":30", "3564", "569", "-279", "多平", G],
  [":32", "3565", "1514", "-1229", "多平", G],
  [":38", "3565", "547", "+297", "空开", G],
  [":48", "3565", "768", "-587", "多平", G],
  ["14:51", "3565", "820", "-457", "空平", R],
  ["14:53", "3563", "744", "+10", "空开", G],
  ["14:54", "3564", "584", "+71", "多开", R],
  ["14:57", "3563", "604", "-580", "空平", R],
  [":53", "3563", "658", "-619", "空平", R],
  [":54", "3562", "1288", "+221", "空开", G],
  [":59", "3562", "504", "+486", "多开", R],
  ["14:58", "3562", "519", "+189", "多开", R],
  ["14:59", "3563", "1014", "-231", "多平", G],
];

function QuotePanel() {
  return (
    <aside className="flex w-[239px] shrink-0 flex-col overflow-hidden border-l border-[#d01808] bg-black">
      <div className="relative flex h-6 shrink-0 items-center justify-center pr-4">
        <h2 className="text-[20px] leading-6 whitespace-nowrap text-[#ffff00] [font-family:'Liberation_Serif','Noto_Sans_CJK_SC',serif]">螺纹2410(rb2410)</h2>
        <button type="button" aria-label="弹出" className="absolute top-px right-0 h-[14px] w-[15px] border border-[#80b8ff]">
          <svg viewBox="0 0 13 12" className="h-3 w-[13px]"><path d="M5.500 1.500h6v5h-6zM1.500 5.500h7v5h-7z" fill="#000" stroke="#80b8ff" /></svg>
        </button>
      </div>
      <div className="flex h-[5px] shrink-0 border-t border-[#d01808]">
        <div className="w-2/5 bg-[#ff3c3c]" />
        <div className="flex-1 bg-[#00e600]" />
      </div>
      <Depth rows={ASKS} />
      <Depth rows={BIDS} />
      <table className="w-full table-fixed border-y border-[#d01808]">
        <colgroup>
          <col className="w-[37px]" />
          <col className="w-[76px]" />
          <col className="w-[48px]" />
          <col />
        </colgroup>
        <tbody>
          {STATS.map(([a, av, ac, b, bv, bc]) => (
            <tr key={a} className="h-5">
              <th scope="row" className="p-0 pl-[4px] text-left text-[14px] leading-4 font-normal text-[#e0e0e0]">{a}</th>
              <td className={`p-0 text-right leading-4 ${NUM} ${ac}`}>{av}</td>
              <th scope="row" className="p-0 pl-[14px] text-left text-[14px] leading-4 font-normal whitespace-nowrap text-[#e0e0e0]">{b}</th>
              <td className={`p-0 pr-[3px] text-right leading-4 ${NUM} ${bc}`}>{bv}</td>
            </tr>
          ))}
        </tbody>
      </table>
      <table className="w-full table-fixed">
        <colgroup>
          <col className="w-[44px]" />
          <col className="w-[63px]" />
          <col className="w-[48px]" />
          <col className="w-[49px]" />
          <col />
        </colgroup>
        <thead>
          <tr className="h-[22px] text-[14px] leading-4 whitespace-nowrap text-[#909090]">
            <th className="p-0 pl-[4px] text-left font-normal">北京</th>
            <th className="p-0 text-right font-normal">价格</th>
            <th className="p-0 text-right font-normal">
              <span className="text-[12px] [font-family:'Liberation_Sans',sans-serif]">√/</span>大单
            </th>
            <th className="p-0 text-right font-normal">仓差</th>
            <th className="p-0 pl-[7px] text-left font-normal">性质</th>
          </tr>
        </thead>
        <tbody>
          {TICKS.map(([time, price, size, delta, kind, tone], k) => (
            <tr key={k} className="h-[22px] leading-4 whitespace-nowrap">
              <td className={time.length > 3 ? `p-0 pl-[5px] text-white ${NUM}` : "p-0 pr-[5px] text-right text-[12px] text-[#e0e0e0]"}>{time}</td>
              <td className={`p-0 text-right ${NUM} ${R}`}>{price}</td>
              <td className={`p-0 text-right ${NUM} ${tone}`}>{size}</td>
              <td className={`p-0 text-right ${NUM} ${Y}`}>{delta}</td>
              <td className={`p-0 pl-[7px] text-[14px] ${tone}`}>{kind}</td>
            </tr>
          ))}
        </tbody>
      </table>
      <div className="mt-auto flex h-4 shrink-0 text-[12px] leading-4 text-white">
        <button type="button" className="w-9 rounded-b border-r border-b border-[#d01808]">笔</button>
        <button type="button" className="w-9 border-t border-r border-[#d01808]">权</button>
        <span className="flex-1 border-t border-[#d01808]" />
      </div>
    </aside>
  );
}

export default function App() {
  return (
    <div className="relative flex h-screen flex-col overflow-hidden bg-[#c8c4c4] [font-family:'Noto_Sans_CJK_SC',sans-serif]">
      <TitleBar />
      <Toolbar />
      <div className="h-[2px] shrink-0 bg-[#c4bcbc]" />
      <div className="relative flex min-h-0 flex-1">
        <SideTabs />
        <div className="relative flex min-w-0 flex-1">
          <ChartArea />
          <InfoBox />
        </div>
        <QuotePanel />
      </div>
      <div className="h-[5px] shrink-0 bg-[#c8c4c4]" />
      <RangeDialog />
    </div>
  );
}
